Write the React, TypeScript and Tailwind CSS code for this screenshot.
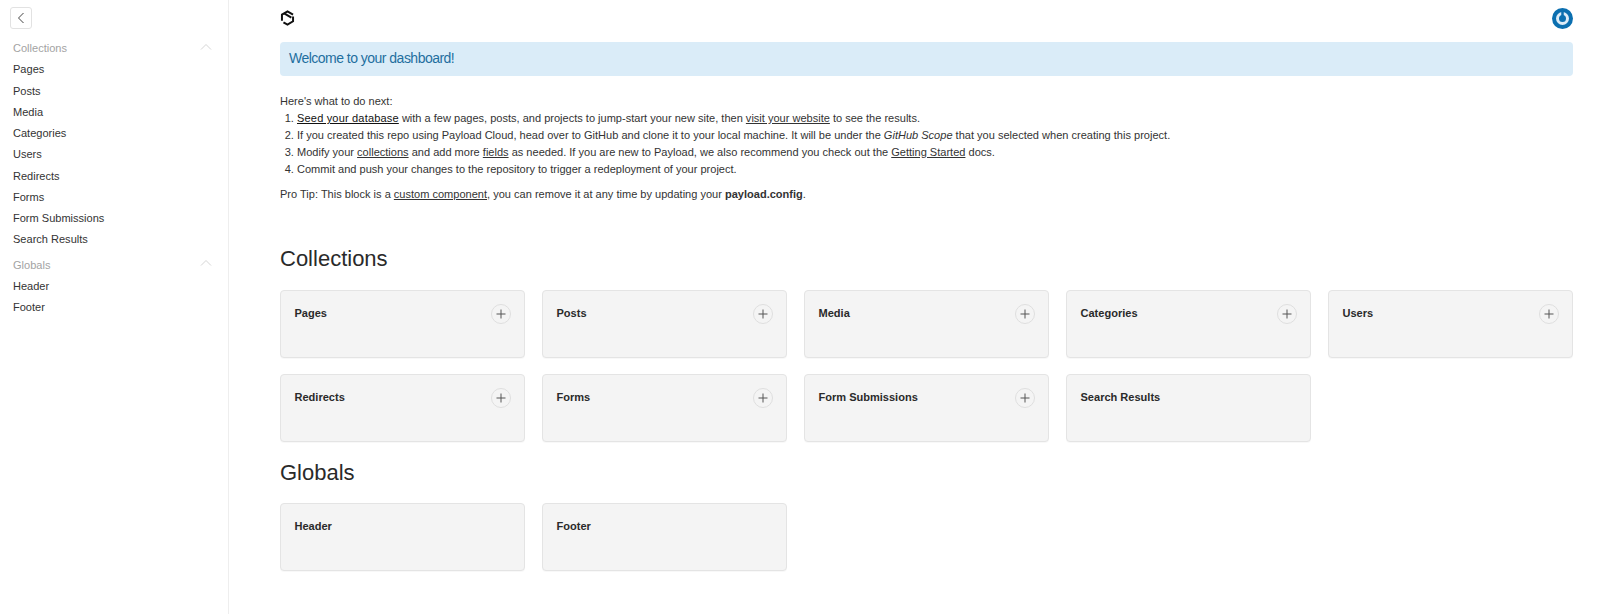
const collections = ["Pages", "Posts", "Media", "Categories", "Users", "Redirects", "Forms", "Form Submissions", "Search Results"];
const noAdd = ["Search Results"];

function Card({ name, add }: { name: string; add: boolean }) {
  return (
    <div className="relative h-[68px] rounded-[4px] border border-[#e4e4e4] bg-[#f4f4f4] pl-[13.5px] pr-[13px] pt-[13.5px] shadow-[0_1px_1px_rgba(0,0,0,0.03)]">
      <div className="text-[11.04px] leading-[16px] font-bold text-[#2a2a2a]">{name}</div>
      {add && (
        <div className="absolute right-[13.5px] top-[13px] flex h-[20px] w-[20px] items-center justify-center rounded-full border border-[#dfdfdf] bg-[#f4f4f4] text-[#555555]">
          <svg width="10" height="10" viewBox="0 0 10 10" fill="none" stroke="currentColor" strokeWidth="1">
            <path d="M5 0.5v9M0.5 5h9" />
          </svg>
        </div>
      )}
    </div>
  );
}

function NavGroup({ title, items }: { title: string; items: string[] }) {
  return (
    <div className="mb-[3.5px]">
      <div className="flex h-[21.5px] items-center justify-between pr-[16px]">
        <span className="text-[11.04px] text-[#a3a3a3]">{title}</span>
        <svg width="12" height="8" viewBox="0 0 12 8" fill="none" stroke="#d6d6d6" strokeWidth="1" className="mt-[-4px]">
          <path d="M1 6.5 6 1.5l5 5" />
        </svg>
      </div>
      {items.map((item) => (
        <div key={item} className="h-[21.25px] text-[11.04px] leading-[21.25px] text-[#333333]">{item}</div>
      ))}
    </div>
  );
}

export default function App() {
  return (
    <div className="flex h-[614px] w-[1600px] overflow-hidden bg-white font-['Liberation_Sans',Arial,sans-serif] text-[11.04px] text-[#333333]">
      <aside className="w-[229px] shrink-0 border-r border-[#eeeeee] pl-[13px] pt-[7px]">
        <button className="mb-[8.8px] ml-[-3px] flex h-[22px] w-[22px] items-center justify-center rounded-[3px] border border-[#e2e2e2] bg-white">
          <svg width="8" height="12" viewBox="0 0 8 12" fill="none" stroke="#444444" strokeWidth="1">
            <path d="M6.5 1 1.5 6l5 5" />
          </svg>
        </button>
        <NavGroup title="Collections" items={collections} />
        <NavGroup title="Globals" items={["Header", "Footer"]} />
      </aside>
      <main className="min-w-0 flex-1 pl-[51px] pr-[27px] pt-[9px]">
        <header className="flex h-[18px] items-center justify-between">
          <svg width="15" height="16" viewBox="0 0 15 17" fill="none" stroke="#111111" strokeWidth="2.1">
            <path d="M1.6 11.5V4.9L7.5 1.4l5.9 3.5" />
            <path d="M4 3.6l7.6 4.6" />
            <path d="M13.4 7v5L7.5 15.6 3.2 13.1" />
          </svg>
          <svg width="21" height="21" viewBox="0 0 21 21" fill="none">
            <circle cx="10.5" cy="10.5" r="10.5" fill="#0b6fb0" />
            <circle cx="10.5" cy="10.5" r="5" stroke="#dcecf8" strokeWidth="3" />
            <path d="M10.5 3v7.5" stroke="#0b6fb0" strokeWidth="2.5" />
          </svg>
        </header>
        <div className="mt-[15px] flex h-[34px] items-center rounded-[4px] bg-[#daecf8] pb-[2px] pl-[9px] text-[14px] tracking-[-0.52px] text-[#1f6f9f]">Welcome to your dashboard!</div>
        <div className="mt-[17px]">
          <p className="leading-[17px]">Here's what to do next:</p>
          <ol className="list-decimal pl-[17px] leading-[17px]">
            <li><a className="font-medium tracking-[0.17px] text-[#111111] underline">Seed your database</a> with a few pages, posts, and projects to jump-start your new site, then <a className="underline">visit your website</a> to see the results.</li>
            <li>If you created this repo using Payload Cloud, head over to GitHub and clone it to your local machine. It will be under the <em>GitHub Scope</em> that you selected when creating this project.</li>
            <li>Modify your <a className="underline">collections</a> and add more <a className="underline">fields</a> as needed. If you are new to Payload, we also recommend you check out the <a className="underline">Getting Started</a> docs.</li>
            <li>Commit and push your changes to the repository to trigger a redeployment of your project.</li>
          </ol>
          <p className="mt-[8px] leading-[17px]">Pro Tip: This block is a <a className="underline">custom component</a>, you can remove it at any time by updating your <strong>payload.config</strong>.</p>
        </div>
        <h2 className="mt-[41px] text-[22px] leading-[30px] text-[#2a2a2a]">Collections</h2>
        <div className="mt-[16px] grid grid-cols-5 gap-x-[17px] gap-y-[16px]">
          {collections.map((c) => <Card key={c} name={c} add={!noAdd.includes(c)} />)}
        </div>
        <h2 className="mt-[16px] text-[22px] leading-[30px] text-[#2a2a2a]">Globals</h2>
        <div className="mt-[15px] grid grid-cols-5 gap-x-[17px]">
          <Card name="Header" add={false} />
          <Card name="Footer" add={false} />
        </div>
      </main>
    </div>
  );
}
